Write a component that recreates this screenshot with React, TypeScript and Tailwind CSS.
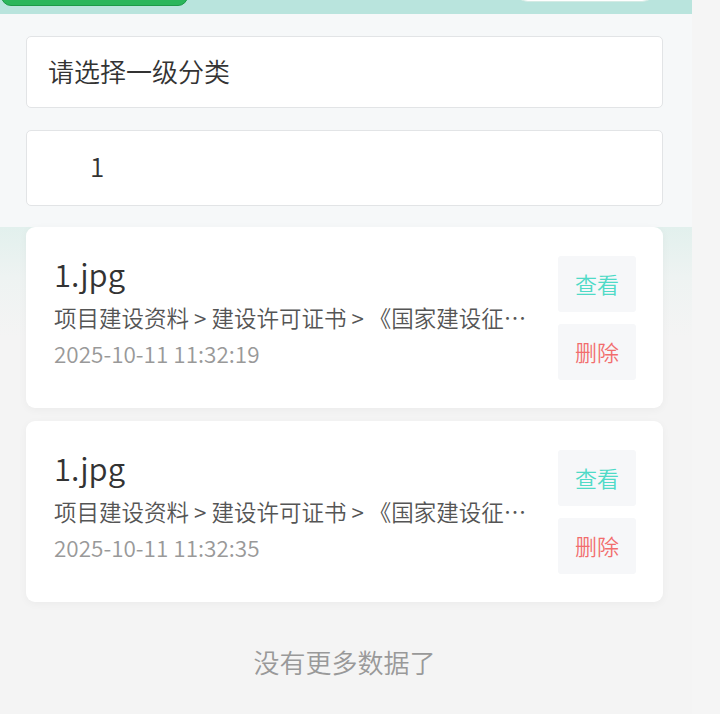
const font = "font-['Noto_Sans_CJK_SC','Noto_Sans',sans-serif]";

type FileItem = {
  name: string;
  path: string;
  time: string;
};

const files: FileItem[] = [
  {
    name: "1.jpg",
    path: "项目建设资料 > 建设许可证书 > 《国家建设征地补偿标准》",
    time: "2025-10-11 11:32:19",
  },
  {
    name: "1.jpg",
    path: "项目建设资料 > 建设许可证书 > 《国家建设征地补偿标准》",
    time: "2025-10-11 11:32:35",
  },
];

const FileCard = ({ item }: { item: FileItem }) => {
  return (
    <div className="flex h-[181px] items-center rounded-[9px] bg-white pl-[28px] pr-[27px] shadow-[0_2px_8px_rgba(0,0,0,0.04)]">
      <div className="mb-[10px] flex min-w-0 flex-1 flex-col">
        <div className="mb-[5px] text-[31px] leading-[40px] text-[#333]">{item.name}</div>
        <div className="truncate text-[22.5px] leading-[36px] text-[#555]">{item.path}</div>
        <div className="text-[22.5px] leading-[36px] text-[#999]">{item.time}</div>
      </div>
      <div className="ml-[26px] flex flex-col gap-[12px]">
        <button className="flex h-[56px] w-[78px] items-center justify-center rounded-[3px] bg-[#f6f7f9] text-[22px] text-[#4fdac7]">
          查看
        </button>
        <button className="flex h-[56px] w-[78px] items-center justify-center rounded-[3px] bg-[#f6f7f9] text-[22px] text-[#f26d6d]">
          删除
        </button>
      </div>
    </div>
  );
};

const App: React.FC = () => {
  return (
    <div className={`flex min-h-[714px] w-full bg-[#f5f5f5] font-[350] ${font}`}>
      <div className="flex w-[692px] flex-col bg-[#f4f4f4]">
        {/* top bar, mostly scrolled away */}
        <div className="flex h-[14px] shrink-0 items-end justify-between overflow-hidden bg-[#b9e4dd]">
          <div className="mb-[8px] ml-[1px] h-[30px] w-[187px] shrink-0 rounded-b-[10px] border border-[#1d9a48] bg-[#2bb65b]" />
          <div className="mb-[12px] mr-[35px] h-[30px] w-[144px] shrink-0 rounded-full border border-[#d3ebe4] bg-white" />
        </div>

        {/* filters */}
        <div className="flex flex-col gap-[22px] bg-[#f6f8f9] pb-[21px] pl-[26px] pr-[29px] pt-[22px]">
          <div className="flex h-[72px] items-center rounded-[5px] border border-[#e2e4e6] bg-white pb-[4px] pl-[21px] text-[26px] text-[#333]">
            请选择一级分类
          </div>
          <div className="flex h-[76px] items-center rounded-[5px] border border-[#e2e4e6] bg-white pb-[6px] pl-[63px] text-[26px] text-[#333]">
            1
          </div>
        </div>

        {/* list */}
        <div className="flex flex-1 flex-col bg-[linear-gradient(to_bottom,#e2f0ed_0px,#eef3f2_50px,#f4f4f4_110px)] pl-[26px] pr-[29px]">
          <div className="flex flex-col gap-[13px]">
            {files.map((f, i) => (
              <FileCard key={i} item={f} />
            ))}
          </div>
          <div className="mt-[42px] text-center text-[26px] leading-[36px] text-[#999]">
            没有更多数据了
          </div>
        </div>
      </div>
      <div className="flex-1 bg-[#f5f5f5]" />
    </div>
  );
};

export default App;
